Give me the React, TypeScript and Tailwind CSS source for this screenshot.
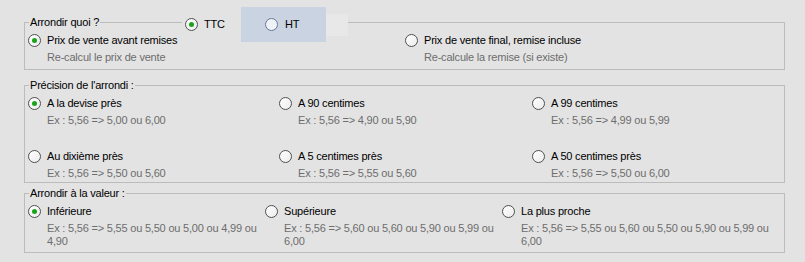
import React from "react";

function Radio({ checked = false, tone = "normal" }: { checked?: boolean; tone?: "normal" | "blue" }) {
  const cls =
    tone === "blue"
      ? "border-[#6a7894] bg-[#eef2f9]"
      : "border-[#505050] bg-gradient-to-br from-[#ffffff] to-[#ececec]";
  return (
    <span className={`flex h-[13px] w-[13px] shrink-0 items-center justify-center rounded-full border ${cls}`}>
      {checked && <span className="h-[5px] w-[5px] rounded-full bg-[#19a319]" />}
    </span>
  );
}

function Option({
  label,
  sub,
  checked = false,
}: {
  label: string;
  sub: React.ReactNode;
  checked?: boolean;
}) {
  return (
    <div className="flex items-start gap-[6px]">
      <Radio checked={checked} />
      <div className="flex flex-col">
        <span className="leading-[13px] text-black">{label}</span>
        <span className="mt-[4px] leading-[13px] text-[#6d6d6d]">{sub}</span>
      </div>
    </div>
  );
}

function Group({
  title,
  className,
  children,
}: {
  title: string;
  className: string;
  children: React.ReactNode;
}) {
  return (
    <div className={`relative border border-[#bcbcbc] pl-[3px] ${className}`}>
      <span className="absolute -top-[7px] left-[4px] bg-[#e3e3e3] px-[1px] leading-[13px] text-black">
        {title}
      </span>
      {children}
    </div>
  );
}

export default function App() {
  return (
    <div className="relative h-[262px] w-[805px] overflow-hidden bg-[#e3e3e3] pl-[24px] pr-[20px] pt-[22px] font-['Liberation_Sans',Arial,sans-serif] text-[11px] tracking-[-0.2px]">
      <Group title="Arrondir quoi ?" className="h-[48px] pt-[11px]">
        <div className="grid grid-cols-[377px_1fr]">
          <Option label="Prix de vente avant remises" sub="Re-calcul le prix de vente" checked />
          <Option label="Prix de vente final, remise incluse" sub="Re-calcule la remise (si existe)" />
        </div>
      </Group>

      <Group title="Précision de l'arrondi :" className="mt-[15px] h-[98px] pt-[11px]">
        <div className="grid grid-cols-[251px_253px_1fr] gap-y-[23px]">
          <Option label="A la devise près" sub="Ex : 5,56 => 5,00 ou 6,00" checked />
          <Option label="A 90 centimes" sub="Ex : 5,56 => 4,90 ou 5,90" />
          <Option label="A 99 centimes" sub="Ex : 5,56 => 4,99 ou 5,99" />
          <Option label="Au dixième près" sub="Ex : 5,56 => 5,50 ou 5,60" />
          <Option label="A 5 centimes près" sub="Ex : 5,56 => 5,55 ou 5,60" />
          <Option label="A 50 centimes près" sub="Ex : 5,56 => 5,50 ou 6,00" />
        </div>
      </Group>

      <Group title="Arrondir à la valeur :" className="mt-[10px] h-[60px] pt-[11px]">
        <div className="grid grid-cols-[237px_237px_1fr]">
          <Option
            label="Inférieure"
            checked
            sub={
              <>
                Ex : 5,56 =&gt; 5,55 ou 5,50 ou 5,00 ou 4,99 ou
                <br />
                4,90
              </>
            }
          />
          <Option
            label="Supérieure"
            sub={
              <>
                Ex : 5,56 =&gt; 5,60 ou 5,60 ou 5,90 ou 5,99 ou
                <br />
                6,00
              </>
            }
          />
          <Option
            label="La plus proche"
            sub={
              <>
                Ex : 5,56 =&gt; 5,55 ou 5,60 ou 5,50 ou 5,90 ou 5,99 ou
                <br />
                6,00
              </>
            }
          />
        </div>
      </Group>

      {/* TTC / HT selector laid over the first group's frame */}
      <div className="absolute left-[182px] top-[7px] flex h-[35px] items-center">
        <div className="flex h-full w-[59px] items-center gap-[6px] bg-[#e3e3e3] pl-[3px]">
          <Radio checked />
          <span className="leading-[13px] text-black">TTC</span>
        </div>
        <div className="flex h-full w-[85px] items-center gap-[7px] bg-[#c9d3e1] pl-[24px]">
          <Radio tone="blue" />
          <span className="leading-[13px] text-black">HT</span>
        </div>
        <div className="h-[22px] w-[22px] bg-[#e8e8e8]" />
      </div>
    </div>
  );
}
